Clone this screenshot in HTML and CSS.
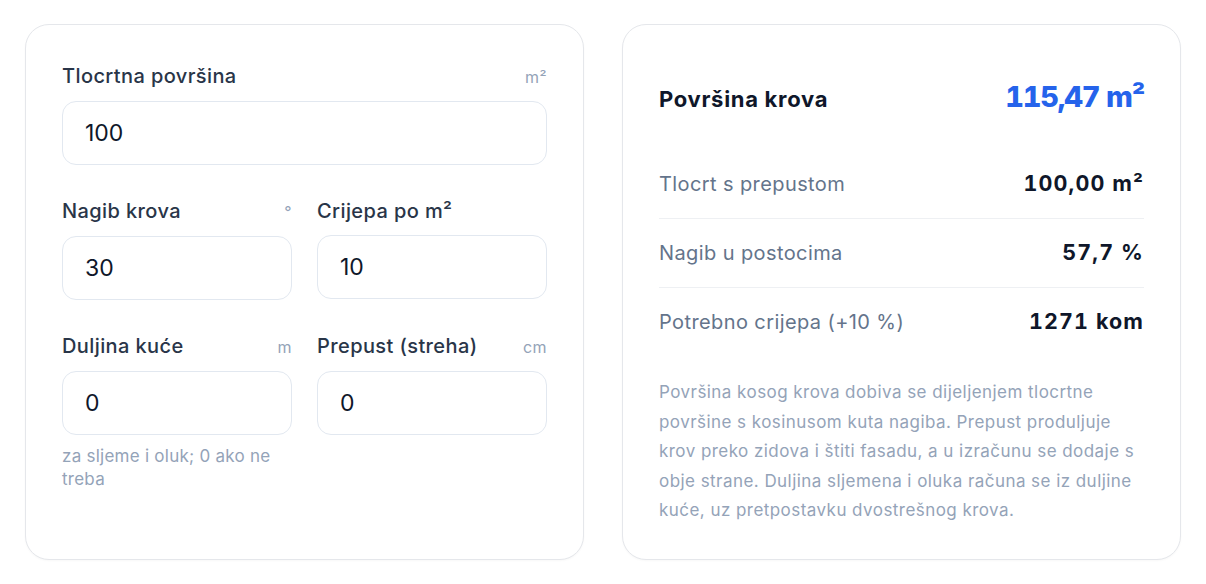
FILE: index.html
```html
<!DOCTYPE html>
<html lang="hr">
<head>
    <meta charset="UTF-8">
    <meta name="viewport" content="width=device-width, initial-scale=1.0">
    <title>Kalkulator površine krova</title>
    <link rel="stylesheet" href="styles.css">
</head>
<body>
    <div class="layout">
        <div class="card inputs">
            <div class="field">
                <div class="field-label">
                    <span>Tlocrtna površina</span>
                    <span class="unit">m²</span>
                </div>
                <input type="text" value="100">
            </div>

            <div class="field-row">
                <div class="field">
                    <div class="field-label">
                        <span>Nagib krova</span>
                        <span class="unit">°</span>
                    </div>
                    <input type="text" value="30">
                </div>
                <div class="field">
                    <div class="field-label">
                        <span>Crijepa po m²</span>
                    </div>
                    <input type="text" value="10">
                </div>
            </div>

            <div class="field-row">
                <div class="field">
                    <div class="field-label">
                        <span>Duljina kuće</span>
                        <span class="unit">m</span>
                    </div>
                    <input type="text" value="0">
                    <div class="hint">za sljeme i oluk; 0 ako ne treba</div>
                </div>
                <div class="field">
                    <div class="field-label">
                        <span>Prepust (streha)</span>
                        <span class="unit">cm</span>
                    </div>
                    <input type="text" value="0">
                </div>
            </div>
        </div>

        <div class="card results">
            <div class="result-head">
                <span class="result-title">Površina krova</span>
                <span class="result-main">115,47 m²</span>
            </div>

            <div class="result-row">
                <span class="result-label">Tlocrt s prepustom</span>
                <span class="result-value">100,00 m²</span>
            </div>
            <div class="result-row">
                <span class="result-label">Nagib u postocima</span>
                <span class="result-value">57,7 %</span>
            </div>
            <div class="result-row">
                <span class="result-label">Potrebno crijepa (+10 %)</span>
                <span class="result-value">1271 kom</span>
            </div>

            <p class="note">Površina kosog krova dobiva se dijeljenjem tlocrtne površine s kosinusom kuta nagiba. Prepust produljuje krov preko zidova i štiti fasadu, a u izračunu se dodaje s obje strane. Duljina sljemena i oluka računa se iz duljine kuće, uz pretpostavku dvostrešnog krova.</p>
        </div>
    </div>
</body>
</html>
```

FILE: styles.css
```css
body {
    font-family: Inter, "Noto Sans", sans-serif;
    margin: 0;
    padding: 24px 25px;
    background: #ffffff;
    color: #0f172a;
}
.layout {
    display: grid;
    grid-template-columns: 1fr 1fr;
    gap: 38px;
}
.card {
    background: white;
    border: 1px solid #e5e7eb;
    border-radius: 24px;
    padding: 36px;
    box-shadow: 0 1px 2px rgba(15,23,42,0.03);
}
.inputs {
    display: flex;
    flex-direction: column;
    gap: 31px;
}
.field-row {
    display: grid;
    grid-template-columns: 1fr 1fr;
    gap: 25px;
}
.field-label {
    display: flex;
    justify-content: space-between;
    align-items: baseline;
    font-size: 20px;
    line-height: 30px;
    font-weight: 500;
    letter-spacing: 0.4px;
    color: #293548;
    margin-bottom: 9px;
}
.unit {
    font-size: 16px;
    font-weight: 400;
    letter-spacing: 0.4px;
    color: #94a3b8;
}
.field input {
    display: block;
    box-sizing: border-box;
    width: 100%;
    height: 64px;
    padding: 0 22px;
    border: 1px solid #e2e8f0;
    border-radius: 14px;
    font-family: inherit;
    font-size: 23px;
    color: #0f172a;
    background: white;
    outline: none;
}
.hint {
    margin-top: 10px;
    font-size: 17px;
    line-height: 23px;
    letter-spacing: 0.25px;
    color: #94a3b8;
}
.results {
    padding-bottom: 33px;
}
.result-head {
    display: flex;
    justify-content: space-between;
    align-items: baseline;
    padding: 20px 0 21px 0;
    margin-bottom: 16px;
}
.result-title {
    font-size: 22px;
    font-weight: 700;
    letter-spacing: 0.7px;
    color: #0f172a;
}
.result-main {
    font-size: 29px;
    line-height: 32px;
    font-weight: 800;
    letter-spacing: -1.2px;
    font-variant-numeric: tabular-nums;
    color: #2563eb;
}
.result-row {
    display: flex;
    justify-content: space-between;
    align-items: baseline;
    padding: 20px 0;
    line-height: 27px;
    border-bottom: 1px solid #eef0f3;
}
.result-row:last-of-type {
    border-bottom: none;
}
.result-label {
    font-size: 20px;
    letter-spacing: 0.4px;
    color: #64748b;
}
.result-value {
    font-size: 21.5px;
    font-weight: 700;
    letter-spacing: 1.1px;
    font-variant-numeric: tabular-nums;
    color: #0f172a;
}
.note {
    margin: 22px 0 0 0;
    font-size: 17px;
    line-height: 29.5px;
    letter-spacing: 0.45px;
    color: #94a3b8;
}
```
